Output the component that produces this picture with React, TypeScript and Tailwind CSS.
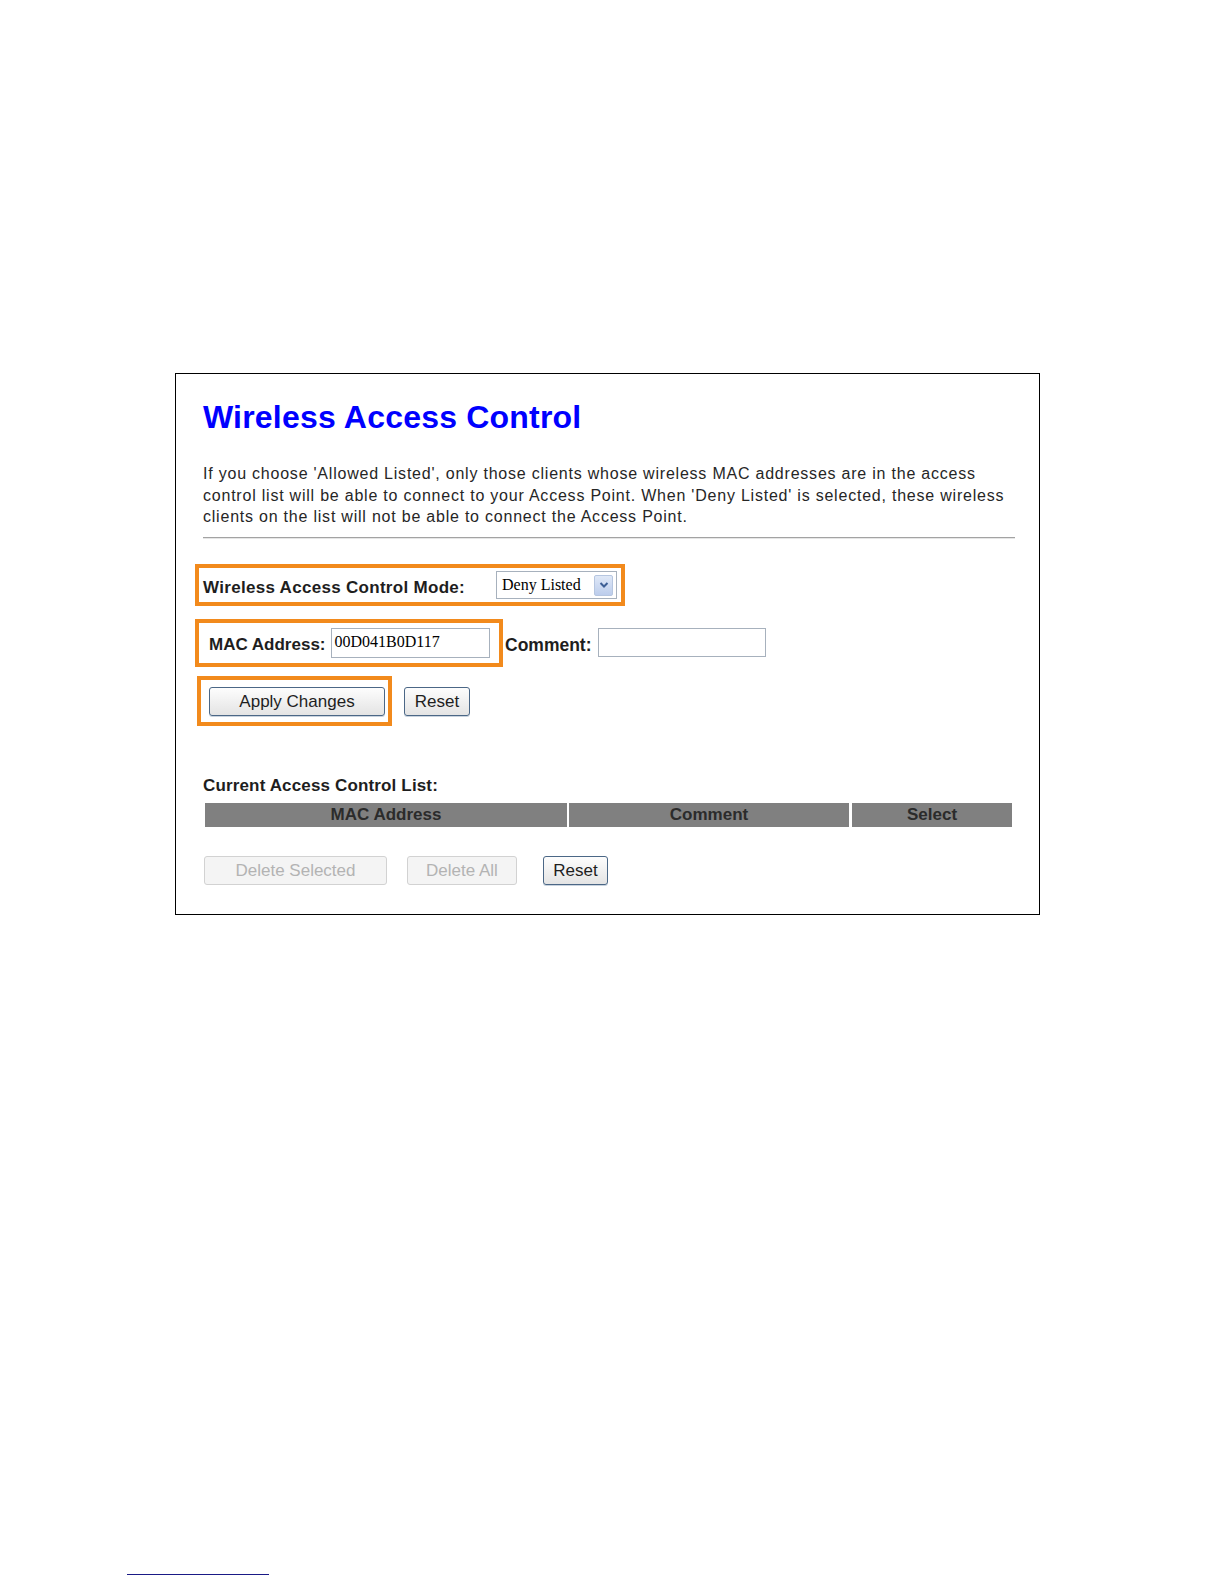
function Chevron() {
  return (
    <svg width="10" height="8" viewBox="0 0 10 8" className="block">
      <path d="M1.5 2 L5 5.5 L8.5 2" fill="none" stroke="#3d5f95" strokeWidth="2" />
    </svg>
  );
}

function Btn({ label, w, disabled }: { label: string; w: string; disabled?: boolean }) {
  const look = disabled
    ? 'border-[#d2d2d2] bg-[#f4f4f4] text-[#b3b3b3]'
    : 'border-[#4b6786] bg-gradient-to-b from-[#fdfdfd] to-[#e4e4e4] text-[#1e1e1e] shadow-[0_1px_0_#c9d3de]';
  return (
    <div className={`${w} h-[29px] rounded-[3px] border flex items-center justify-center text-[17px] leading-none ${look}`}>
      {label}
    </div>
  );
}

export default function App() {
  return (
    <div className="min-h-[1584px] bg-white pt-[373px] pl-[175px] font-['Liberation_Sans',Arial,sans-serif] text-[#1e1e1e]">
      <div className="w-[865px] h-[542px] border border-black pl-[19px] pt-[27px]">
        <h1 className="ml-[8px] text-[32px] leading-[32px] font-bold tracking-[0.2px] text-[#0000ff]">Wireless Access Control</h1>

        <p className="ml-[8px] mt-[30px] w-[830px] text-[16px] leading-[21.7px] tracking-[0.78px] text-[#262626]">
          If you choose 'Allowed Listed', only those clients whose wireless MAC addresses are in the access
          <br />
          control list will be able to connect to your Access Point. When 'Deny Listed' is selected, these wireless
          <br />
          clients on the list will not be able to connect the Access Point.
        </p>

        <div className="ml-[8px] mt-[9px] w-[812px] h-px bg-[#a3a3a3] shadow-[0_1px_0_#e6e6e6]" />

        {/* mode */}
        <div className="mt-[26px] w-[430px] h-[42px] border-4 border-[#f28a1c] flex items-start px-[4px]">
          <div className="mt-[10px] text-[17px] leading-[20px] font-bold tracking-[0.3px]">Wireless Access Control Mode:</div>
          <div className="ml-auto mt-[3px] w-[121px] h-[28px] border border-[#a7b1bd] bg-white flex items-center pl-[5px] pr-[3px]">
            <span className="font-['Liberation_Serif','Times_New_Roman',serif] text-[16px] leading-none text-black">Deny Listed</span>
            <div className="ml-auto w-[19px] h-[21px] rounded-[2px] border border-[#b6c6e0] bg-gradient-to-b from-[#dfe8f7] to-[#bccdec] flex items-center justify-center">
              <Chevron />
            </div>
          </div>
        </div>

        {/* mac address */}
        <div className="mt-[13px] flex items-start">
          <div className="w-[308px] h-[48px] border-4 border-[#f28a1c] flex items-start pl-[10px]">
            <div className="mt-[12px] text-[17px] leading-[20px] font-bold">MAC Address:</div>
            <div className="ml-[5px] mt-[5px] w-[159px] h-[30px] border border-[#a7b1bd] bg-white pl-[3px] pt-[3px] font-['Liberation_Serif','Times_New_Roman',serif] text-[16px] leading-[20px] text-black">
              00D041B0D117
            </div>
          </div>
          <div className="ml-[2px] mt-[16px] text-[17.5px] leading-[20px] font-bold">Comment:</div>
          <div className="ml-[6px] mt-[9px] w-[168px] h-[29px] border border-[#a7b1bd] bg-white" />
        </div>

        {/* apply */}
        <div className="mt-[9px] flex items-start">
          <div className="ml-[2px] w-[195px] h-[50px] border-4 border-[#f28a1c] pl-[8px] pt-[7px]">
            <Btn label="Apply Changes" w="w-[176px]" />
          </div>
          <div className="ml-[12px] mt-[11px]">
            <Btn label="Reset" w="w-[66px]" />
          </div>
        </div>

        <div className="ml-[8px] mt-[50px] text-[17px] leading-[20px] font-bold tracking-[0.15px]">Current Access Control List:</div>

        <div className="ml-[10px] mt-[7px] flex h-[24px] text-[17px] font-bold text-[#2b2b2b]">
          <div className="w-[362px] bg-[#808080] flex items-center justify-center">MAC Address</div>
          <div className="ml-[2px] w-[280px] bg-[#808080] flex items-center justify-center">Comment</div>
          <div className="ml-[3px] w-[160px] bg-[#808080] flex items-center justify-center">Select</div>
        </div>

        <div className="ml-[9px] mt-[29px] flex items-start">
          <Btn label="Delete Selected" w="w-[183px]" disabled />
          <div className="ml-[20px]">
            <Btn label="Delete All" w="w-[110px]" disabled />
          </div>
          <div className="ml-[26px]">
            <Btn label="Reset" w="w-[65px]" />
          </div>
        </div>
      </div>

      <div className="ml-[-48px] mt-[659px] w-[142px] h-px bg-[#1a1a86]" />
    </div>
  );
}
